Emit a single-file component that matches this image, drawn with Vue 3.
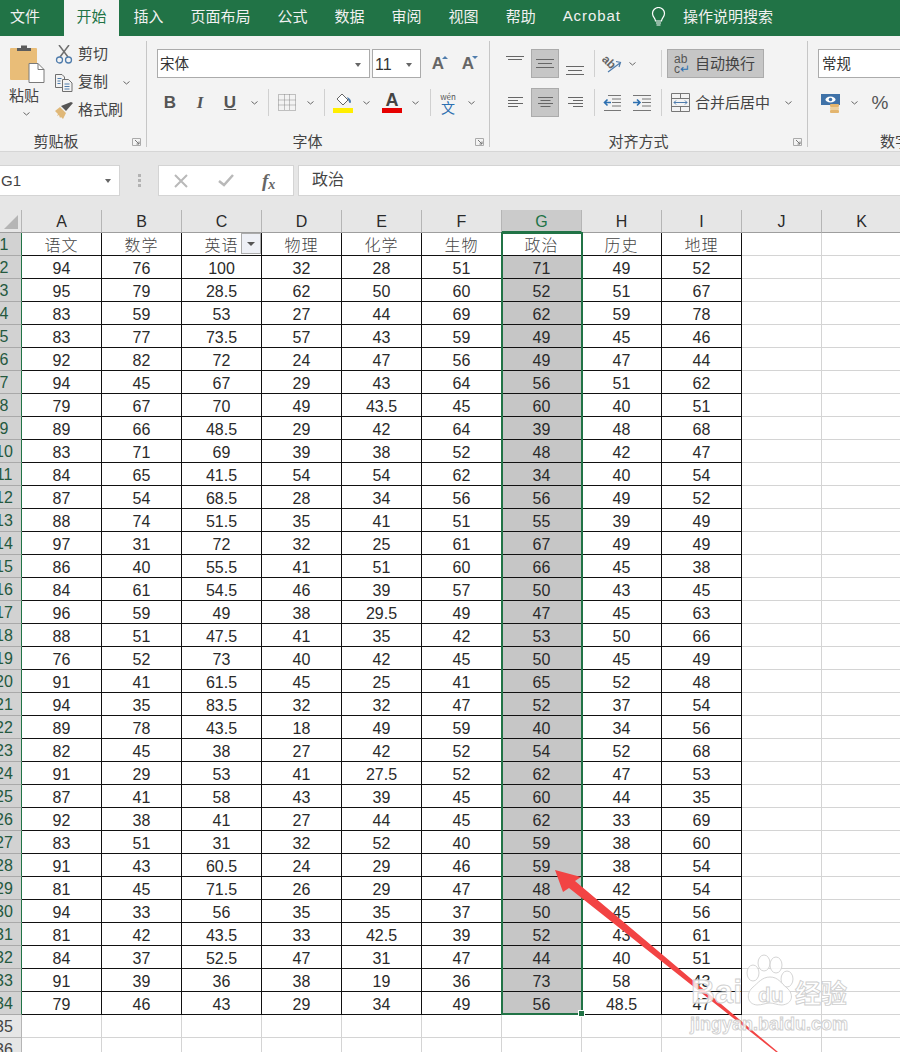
<script setup>
const tabs = ['开始', '插入', '页面布局', '公式', '数据', '审阅', '视图', '帮助', 'Acrobat']
const cols = ['A', 'B', 'C', 'D', 'E', 'F', 'G', 'H', 'I', 'J', 'K']
const heads = ['语文', '数学', '英语', '物理', '化学', '生物', '政治', '历史', '地理']
const raw = `94 76 100 32 28 51 71 49 52
95 79 28.5 62 50 60 52 51 67
83 59 53 27 44 69 62 59 78
83 77 73.5 57 43 59 49 45 46
92 82 72 24 47 56 49 47 44
94 45 67 29 43 64 56 51 62
79 67 70 49 43.5 45 60 40 51
89 66 48.5 29 42 64 39 48 68
83 71 69 39 38 52 48 42 47
84 65 41.5 54 54 62 34 40 54
87 54 68.5 28 34 56 56 49 52
88 74 51.5 35 41 51 55 39 49
97 31 72 32 25 61 67 49 49
86 40 55.5 41 51 60 66 45 38
84 61 54.5 46 39 57 50 43 45
96 59 49 38 29.5 49 47 45 63
88 51 47.5 41 35 42 53 50 66
76 52 73 40 42 45 50 45 49
91 41 61.5 45 25 41 65 52 48
94 35 83.5 32 32 47 52 37 54
89 78 43.5 18 49 59 40 34 56
82 45 38 27 42 52 54 52 68
91 29 53 41 27.5 52 62 47 53
87 41 58 43 39 45 60 44 35
92 38 41 27 44 45 62 33 69
83 51 31 32 52 40 59 38 60
91 43 60.5 24 29 46 59 38 54
81 45 71.5 26 29 47 48 42 54
94 33 56 35 35 37 50 45 56
81 42 43.5 33 42.5 39 52 43 61
84 37 52.5 47 31 47 44 40 51
91 39 36 38 19 36 73 58 43
79 46 43 29 34 49 56 48.5 47`
const rows = [heads, ...raw.split('\n').map((l) => l.split(' '))]
const extra = [35, 36]
</script>

<template>
  <div class="app">
    <div class="tabbar">
      <div class="tab first">文件</div>
      <div v-for="t in tabs" :key="t" class="tab" :class="{ active: t === '开始', latin: t === 'Acrobat' }">{{ t }}</div>
      <svg class="bulb" width="17" height="20" viewBox="0 0 17 20" fill="none" stroke="#fff" stroke-width="1.2">
        <path d="M5.5 14c0-3-3-4-3-7.5a6 6 0 0 1 12 0c0 3.500-3 4.500-3 7.500z" />
        <path d="M6 16h5M6.500 18h4" />
      </svg>
      <div class="search">操作说明搜索</div>
    </div>

    <div class="ribbon">
      <section class="group g-clip">
        <div class="body clip-body">
          <div class="paste">
            <svg width="36" height="38" viewBox="0 0 36 38">
              <rect x="0" y="3" width="27" height="32" rx="1" fill="#e9bd78" />
              <path d="M7 6V3h4V0.500h6V3h4v3z" fill="#5c5c5c" />
              <path d="M19 18.500h9l6 6v13H19z" fill="#fff" stroke="#7a7a7a" />
              <path d="M28 18.500v6h6" fill="none" stroke="#7a7a7a" />
            </svg>
            <div class="paste-label">粘贴</div>
            <svg class="chev" width="7" height="4" viewBox="0 0 7 4"><path d="M.5.500l3 2.500 3-2.500" fill="none" stroke="#666" /></svg>
          </div>
          <div class="clip-list">
            <div class="clip-row">
              <svg width="18" height="19" viewBox="0 0 18 19" fill="none">
                <path d="M4 0l9 12M14 0L5 12" stroke="#6f6f6f" stroke-width="1.5" />
                <circle cx="4.500" cy="15" r="3" stroke="#4f7cac" stroke-width="1.3" />
                <circle cx="13.500" cy="15" r="3" stroke="#4f7cac" stroke-width="1.3" />
              </svg>
              <span>剪切</span>
            </div>
            <div class="clip-row">
              <svg width="18" height="18" viewBox="0 0 18 18" fill="none" stroke="#6f6f6f">
                <path d="M8 13.500H.5V.5H7l2.500 2.500v2" />
                <path d="M7.500 5.500h6l3.500 3.500v8.500H7.500z" fill="#f3f3f3" />
                <path d="M9.500 10h5M9.500 12.500h5M9.500 15h5M2.500 4.500h4M2.500 7h3M2.500 9.500h3" stroke="#4f7cac" />
              </svg>
              <span>复制</span>
              <svg class="copy-chev" width="7" height="4" viewBox="0 0 7 4"><path d="M.5.500l3 2.500 3-2.500" fill="none" stroke="#666" /></svg>
            </div>
            <div class="clip-row">
              <svg width="18" height="17" viewBox="0 0 18 17">
                <path d="M0 9l5-4 6 6-3 6-2-2-1 1-1-3-2 1 1-2z" fill="#e0b878" />
                <path d="M6 4l5 5 7-8-2-1z" fill="#555" />
              </svg>
              <span>格式刷</span>
            </div>
          </div>
        </div>
        <div class="title">剪贴板<svg class="launch" width="10" height="8" viewBox="0 0 10 8" fill="none" stroke="#777"><path d="M.5 7.500v-7h8v7h-8z" stroke="#aaa" /><path d="M3 2l4 4M7 3.500V6H4.500" /></svg></div>
      </section>

      <section class="group g-font">
        <div class="body stack">
          <div class="row font-r1">
            <div class="input font-name">宋体<i class="tri"></i></div>
            <div class="input font-size"><span class="latin-t">11</span><i class="tri"></i></div>
            <div class="slot w14 m10 grow-a">A<i class="up"></i></div>
            <div class="slot w14 m16 grow-a">A<i class="up down"></i></div>
          </div>
          <div class="row font-r2">
            <div class="slot w30 fmt bold">B</div>
            <div class="slot w30 fmt ital">I</div>
            <div class="slot w30 fmt under">U</div>
            <div class="slot w18"><svg width="7" height="4" viewBox="0 0 7 4"><path d="M.5.500l3 2.500 3-2.500" fill="none" stroke="#666" /></svg></div>
            <div class="slot w10"><i class="sep"></i></div>
            <div class="slot w28">
              <svg width="18" height="17" viewBox="0 0 18 17" fill="none" stroke="#8a8a8a" stroke-dasharray="1 1">
                <path d="M.5.500h17v16H.5zM6.500.5v16M11.500.5v16M.5 6h17M.5 11h17" />
              </svg>
            </div>
            <div class="slot w18"><svg width="7" height="4" viewBox="0 0 7 4"><path d="M.5.500l3 2.500 3-2.500" fill="none" stroke="#666" /></svg></div>
            <div class="slot w10"><i class="sep"></i></div>
            <div class="slot w28">
              <svg width="20" height="20" viewBox="0 0 20 20">
                <path d="M9 1l6 6-5 5-6-6z" fill="#fff" stroke="#666" />
                <path d="M14 4c3 1 4 3 4 5a1 1 0 0 1-2 0z" fill="#4f7cac" />
                <rect y="15" width="20" height="5" fill="#ffee00" />
              </svg>
            </div>
            <div class="slot w18"><svg width="7" height="4" viewBox="0 0 7 4"><path d="M.5.500l3 2.500 3-2.500" fill="none" stroke="#666" /></svg></div>
            <div class="slot w34 color-a"><span>A</span><i></i></div>
            <div class="slot w12"><svg width="7" height="4" viewBox="0 0 7 4"><path d="M.5.500l3 2.500 3-2.500" fill="none" stroke="#666" /></svg></div>
            <div class="slot w18"><i class="sep"></i></div>
            <div class="slot w18 wen"><span class="py">wén</span><span class="wz">文</span></div>
            <div class="slot w28"><svg width="7" height="4" viewBox="0 0 7 4"><path d="M.5.500l3 2.500 3-2.500" fill="none" stroke="#666" /></svg></div>
          </div>
        </div>
        <div class="title">字体<svg class="launch" width="10" height="8" viewBox="0 0 10 8" fill="none" stroke="#777"><path d="M.5 7.500v-7h8v7h-8z" stroke="#aaa" /><path d="M3 2l4 4M7 3.500V6H4.500" /></svg></div>
      </section>

      <section class="group g-align">
        <div class="body stack">
          <div class="row align-r1">
            <div class="slot w28 start"><svg width="18" height="6" viewBox="0 0 18 6" stroke="#666"><path d="M0 .5h18M2 3.500h14" /></svg></div>
            <div class="slot w28 pressed m2"><svg width="18" height="10" viewBox="0 0 18 10" stroke="#666"><path d="M0 .5h18M2 4.500h14M0 8.500h18" /></svg></div>
            <div class="slot w28 m2 end"><svg width="18" height="12" viewBox="0 0 18 12" stroke="#666"><path d="M0 3.500h18M2 7.500h14M0 11.500h18" /></svg></div>
            <div class="slot w10"><i class="sep"></i></div>
            <div class="slot w26">
              <svg width="20" height="18" viewBox="0 0 20 18" fill="none">
                <text x="0" y="11" transform="rotate(45 7 7)" class="ab-tx">ab</text>
                <path d="M6 17L18 8M14 6.500l4.500 1-1.500 4.500" stroke="#4f7cac" stroke-width="1.200" />
              </svg>
            </div>
            <div class="slot w14"><svg width="7" height="4" viewBox="0 0 7 4"><path d="M.5.500l3 2.500 3-2.500" fill="none" stroke="#666" /></svg></div>
            <div class="w17"></div>
            <div class="slot w10"><i class="sep"></i></div>
            <div class="wrap-btn m1">
              <span class="ab"><b>ab</b><b>c<em>↵</em></b></span>
              <span class="up-1">自动换行</span>
            </div>
          </div>
          <div class="row align-r2">
            <div class="slot w28"><svg width="15" height="11" viewBox="0 0 15 11" stroke="#666"><path d="M0 .5h15M0 3.500h10M0 6.500h15M0 9.500h10" /></svg></div>
            <div class="slot w28 pressed m2"><svg width="15" height="11" viewBox="0 0 15 11" stroke="#666"><path d="M0 .5h15M2.500 3.500h10M0 6.500h15M2.500 9.500h10" /></svg></div>
            <div class="slot w28 m2"><svg width="15" height="11" viewBox="0 0 15 11" stroke="#666"><path d="M0 .5h15M5 3.500h10M0 6.500h15M5 9.500h10" /></svg></div>
            <div class="slot w10"><i class="sep"></i></div>
            <div class="slot w26">
              <svg width="18" height="16" viewBox="0 0 18 16" fill="none">
                <path d="M5 .5h13M9 4h9M9 7.500h9M9 11h9M1 15.500h17" stroke="#777" />
                <path d="M8 7.500H1.500M4.500 4.500l-3 3 3 3" stroke="#2c6fb0" stroke-width="1.600" />
              </svg>
            </div>
            <div class="w4"></div>
            <div class="slot w26">
              <svg width="18" height="16" viewBox="0 0 18 16" fill="none">
                <path d="M0 .5h18M9 4h9M9 7.500h9M9 11h9M0 15.500h18" stroke="#777" />
                <path d="M0 7.500h6.500M4 4.500l3 3-3 3" stroke="#2c6fb0" stroke-width="1.600" />
              </svg>
            </div>
            <div class="w1"></div>
            <div class="slot w10"><i class="sep"></i></div>
            <div class="slot w26 m1">
              <svg width="19" height="19" viewBox="0 0 19 19" fill="none">
                <path d="M.5.500h18v18H.5zM.5 5.500h18M.5 13.500h18M9.500.5v5M9.500 13.500v5" stroke="#777" />
                <path d="M3 9.500h13M5 7.500l-2 2 2 2M14 7.500l2 2-2 2" stroke="#4f7cac" />
              </svg>
            </div>
            <div class="merge-text">合并后居中</div>
            <div class="slot w36"><svg width="7" height="4" viewBox="0 0 7 4"><path d="M.5.500l3 2.500 3-2.500" fill="none" stroke="#666" /></svg></div>
          </div>
        </div>
        <div class="title">对齐方式<svg class="launch" width="10" height="8" viewBox="0 0 10 8" fill="none" stroke="#777"><path d="M.5 7.500v-7h8v7h-8z" stroke="#aaa" /><path d="M3 2l4 4M7 3.500V6H4.500" /></svg></div>
      </section>

      <section class="group g-num">
        <div class="body stack">
          <div class="row num-r1"><div class="input num-input">常规</div></div>
          <div class="row num-r2">
            <div class="slot w26">
              <svg width="20" height="20" viewBox="0 0 20 20">
                <rect y="1" width="19" height="11" fill="#3f72a8" />
                <ellipse cx="9.500" cy="6.500" rx="5" ry="3" fill="#fff" />
                <circle cx="9.500" cy="6.500" r="1.800" fill="#3f72a8" />
                <rect x="9" y="11" width="9" height="3" rx="1" fill="#e3b56e" />
                <rect x="9" y="14" width="9" height="3" rx="1" fill="#ecd09f" />
                <rect x="9" y="17" width="9" height="3" rx="1" fill="#e3b56e" />
              </svg>
            </div>
            <div class="slot w20"><svg width="7" height="4" viewBox="0 0 7 4"><path d="M.5.500l3 2.500 3-2.500" fill="none" stroke="#666" /></svg></div>
            <div class="slot w32 pct">%</div>
          </div>
        </div>
        <div class="title">数字</div>
      </section>
    </div>

    <div class="formula">
      <div class="namebox">G1<i class="tri"></i></div>
      <div class="dots"><i></i><i></i><i></i></div>
      <div class="fx-btns">
        <svg width="14" height="14" viewBox="0 0 14 14" stroke="#b9b9b9" stroke-width="2" fill="none"><path d="M1 1l12 12M13 1L1 13" /></svg>
        <svg width="16" height="13" viewBox="0 0 16 13" stroke="#b9b9b9" stroke-width="2.500" fill="none"><path d="M1 7l5 4 9-10" /></svg>
        <span class="fx">f<sub>x</sub></span>
      </div>
      <div class="fx-input">政治</div>
    </div>

    <div class="sheet">
      <div class="corner"><i></i></div>
      <div v-for="c in cols" :key="c" class="colhead" :class="{ sel: c === 'G' }">{{ c }}</div>

      <template v-for="(r, i) in rows" :key="i">
        <div class="rowhead on"><span>{{ i + 1 }}</span></div>
        <div
          v-for="(v, j) in r"
          :key="j"
          class="cell data"
          :class="{ cn: i === 0, g: j === 6 && i > 0 }"
        >
          {{ v }}
          <span v-if="i === 0 && j === 2" class="filter"><i></i></span>
        </div>
        <div class="cell"></div>
        <div class="cell"></div>
      </template>
      <template v-for="n in extra" :key="n">
        <div class="rowhead"><span>{{ n }}</span></div>
        <div v-for="c in cols" :key="c" class="cell"></div>
      </template>

      <div class="selection"><i></i></div>
    </div>

    <svg class="overlay" width="900" height="1052" viewBox="0 0 900 1052">
      <path d="M555 870L581 877L575 881L778 1052L776 1052L569 888L563 892Z" fill="#f24444" />
      <g class="wm">
        <ellipse cx="753" cy="973" rx="6" ry="8" />
        <ellipse cx="764" cy="963" rx="6" ry="8" />
        <ellipse cx="776" cy="965" rx="6" ry="8" />
        <ellipse cx="787" cy="979" rx="6" ry="8" />
        <path d="M770 977c8 0 11 6 17 11 7 6 6 16-5 17-5 0-8-2-12-2s-8 2-13 2c-10-1-11-11-5-17 6-5 10-11 18-11z" />
        <text x="691" y="1003" class="wm-bai">Bai</text>
        <text x="758" y="1002" class="wm-du">du</text>
        <text x="795" y="1003" class="wm-cn">经验</text>
        <text x="690" y="1030" class="wm-url">jingyan.baidu.com</text>
      </g>
    </svg>
  </div>
</template>

<style>
html, body { margin: 0; padding: 0; background: #fff; }
</style>

<style scoped>
.app {
  position: relative;
  width: 900px;
  height: 1052px;
  overflow: hidden;
  background: #fff;
  color: #444;
  font-family: "Noto Sans CJK SC", "Liberation Sans", sans-serif;
}
i, em { font-style: normal; }

.tabbar {
  display: flex;
  gap: 2px;
  height: 36px;
  background: #217346;
  color: #f1f1f1;
  font-size: 15px;
  line-height: 32px;
}
.tab { padding: 0 12.5px; white-space: nowrap; }
.tab.first { padding: 0 22px 0 10px; }
.tab.active { background: #f3f3f3; color: #217346; }
.tab.latin { font-family: "Liberation Sans", sans-serif; letter-spacing: .95px; padding-right: 18px; }
.bulb { margin: 7px 0 0 9px; flex: none; }
.search { margin-left: 14px; white-space: nowrap; }

.ribbon {
  display: flex;
  height: 115px;
  background: #f3f3f3;
  border-bottom: 1px solid #d6d6d6;
  box-sizing: content-box;
  font-size: 15px;
  line-height: 20px;
  color: #444;
}
.group {
  flex: none;
  display: flex;
  flex-direction: column;
  height: 106px;
  margin-top: 5px;
  box-sizing: border-box;
  border-right: 1px solid #c6c6c6;
}
.g-clip { width: 147px; }
.g-font { width: 343px; }
.g-align { width: 318px; }
.g-num { width: 174px; border-right: 0; }
.body { height: 92px; display: flex; }
.title {
  position: relative;
  height: 14px;
  line-height: 16px;
  text-align: center;
  white-space: nowrap;
}
.g-clip .title { padding-right: 34px; }
.g-font .title { padding-right: 21px; }
.g-align .title { padding-right: 20px; }
.launch { position: absolute; right: 4px; top: 5px; }

.clip-body { padding-left: 10px; }
.paste { width: 35px; padding-top: 4px; display: flex; flex-direction: column; }
.paste-label { margin: 1px 0 0 -1px; white-space: nowrap; line-height: 22px; }
.paste .chev { margin: 6px 0 0 13px; }
.clip-list { margin-left: 10px; display: flex; flex-direction: column; gap: 1px; }
.clip-row { height: 27px; display: flex; align-items: center; gap: 5px; white-space: nowrap; }
.clip-row span { margin-bottom: 3px; }
.copy-chev { margin-left: 10px; }

.stack { flex-direction: column; padding-top: 8px; gap: 10px; box-sizing: border-box; }
.row { display: flex; height: 29px; flex: none; align-items: stretch; }
.font-r1 { margin-left: 10px; }
.font-r2 { margin-left: 8px; }
.align-r1, .align-r2 { margin-left: 11px; }
.num-r1, .num-r2 { margin-left: 10px; }

.input {
  position: relative;
  box-sizing: border-box;
  background: #fff;
  border: 1px solid #ababab;
  line-height: 27px;
  padding-left: 2px;
  font-size: 14.500px;
  color: #333;
}
.font-name, .num-input { line-height: 25px; }
.font-name { width: 213px; }
.font-size { width: 49px; margin-left: 2px; }
.latin-t { font-family: "Liberation Sans", sans-serif; font-size: 16px; }
.num-input { width: 140px; padding-left: 3px; }
.tri {
  position: absolute;
  right: 8px;
  top: 13px;
  border: 3.500px solid transparent;
  border-top: 4px solid #666;
  border-bottom: 0;
}

.slot { display: flex; align-items: center; justify-content: center; flex: none; box-sizing: border-box; }
.w10 { width: 10px; } .w12 { width: 12px; } .w14 { width: 14px; } .w17 { width: 17px; flex: none; }
.w18 { width: 18px; } .w20 { width: 20px; } .w26 { width: 26px; } .w28 { width: 28px; }
.w30 { width: 30px; } .w32 { width: 32px; } .w34 { width: 34px; } .w36 { width: 36px; }
.w4 { width: 4px; flex: none; } .w1 { width: 1px; flex: none; }
.m1 { margin-left: 1px; } .m2 { margin-left: 2px; } .m10 { margin-left: 10px; } .m16 { margin-left: 16px; }
.sep { display: block; width: 1px; height: 27px; background: #d0d0d0; }
.start { align-items: flex-start; padding-top: 7px; }
.end { align-items: flex-end; padding-bottom: 3px; }
.pressed { background: #c6c6c6; border: 1px solid #ababab; }

.grow-a {
  position: relative;
  font-family: "Liberation Sans", sans-serif;
  font-size: 17px;
  font-weight: 700;
  color: #666;
}
.up {
  position: absolute;
  right: -3px;
  top: 7px;
  border: 3px solid transparent;
  border-bottom: 3px solid #4f7cac;
  border-top: 0;
}
.up.down { border-bottom: 0; border-top: 3px solid #4f7cac; }
.fmt { font-family: "Liberation Sans", sans-serif; font-size: 17px; font-weight: 700; color: #555; }
.ital { font-style: italic; font-family: "Liberation Serif", serif; }
.under { text-decoration: underline; }
.color-a { flex-direction: column; font-family: "Liberation Sans", sans-serif; font-weight: 700; color: #444; font-size: 18px; line-height: 15px; }
.color-a i { display: block; width: 20px; height: 5px; background: #e60000; }
.wen { flex-direction: column; font-size: 8px; line-height: 9px; color: #555; }
.wen .wz { font-size: 14px; line-height: 13px; color: #2c6fb0; }
.ab-tx { font: 700 12px "Liberation Sans", sans-serif; fill: #666; }

.wrap-btn {
  width: 97px;
  box-sizing: border-box;
  display: flex;
  align-items: center;
  gap: 5px;
  padding-left: 6px;
  background: #c6c6c6;
  border: 1px solid #ababab;
  white-space: nowrap;
}
.up-1 { margin-bottom: 2px; }
.ab { display: flex; flex-direction: column; font: 700 12px/10px "Liberation Sans", sans-serif; color: #555; width: 16px; }
.ab b { font-weight: 400; }
.ab em { color: #2c6fb0; }
.merge-text { margin-left: 2px; width: 75px; line-height: 27px; white-space: nowrap; }
.pct { font: 400 19px "Liberation Sans", sans-serif; color: #555; }

.formula {
  display: flex;
  height: 58px;
  box-sizing: border-box;
  padding-top: 13px;
  padding-bottom: 14px;
  background: #e6e6e6;
}
.namebox {
  position: relative;
  width: 120px;
  box-sizing: border-box;
  background: #fff;
  border: 1px solid #d4d4d4;
  border-left: 0;
  padding-left: 1px;
  font: 15px/30px "Liberation Sans", sans-serif;
  color: #444;
}
.dots { width: 38px; display: flex; flex-direction: column; align-items: center; justify-content: center; gap: 2px; }
.dots i { width: 3px; height: 3px; background: #b3b3b3; display: block; }
.fx-btns {
  width: 136px;
  box-sizing: border-box;
  display: flex;
  align-items: center;
  gap: 30px;
  padding-left: 15px;
  background: #fff;
  border: 1px solid #d4d4d4;
}
.fx { font: italic 700 19px/1 "Liberation Serif", serif; color: #666; margin-left: -2px; }
.fx sub { font-size: 14px; vertical-align: -2px; line-height: 0; }
.fx-input {
  flex: 1;
  margin-left: 4px;
  box-sizing: border-box;
  padding-left: 13px;
  background: #fff;
  border: 1px solid #d4d4d4;
  border-right: 0;
  font-size: 16px;
  line-height: 25px;
  color: #444;
}

.sheet {
  position: relative;
  display: grid;
  grid-template-columns: 22px repeat(11, 80px);
  grid-auto-rows: 23px;
  font: 16px/22px "Liberation Sans", sans-serif;
  color: #2a2a2a;
}
.corner {
  background: #e6e6e6;
  box-sizing: border-box;
  border-right: 1px solid #b5b5b5;
  border-bottom: 1px solid #9e9e9e;
}
.corner i {
  display: block;
  width: 0;
  margin: 5px 0 0 4px;
  border-left: 14px solid transparent;
  border-bottom: 14px solid #b5b5b5;
}
.colhead {
  background: #e6e6e6;
  box-sizing: border-box;
  border-right: 1px solid #b5b5b5;
  border-bottom: 1px solid #9e9e9e;
  text-align: center;
  color: #2a2a2a;
  padding-top: 1px;
}
.colhead.sel { background: #cbcbcb; border-bottom: 2px solid #217346; color: #217346; }
.rowhead {
  display: flex;
  justify-content: flex-end;
  overflow: hidden;
  background: #e6e6e6;
  box-sizing: border-box;
  border-right: 1px solid #b5b5b5;
  border-bottom: 1px solid #b5b5b5;
  color: #444;
  padding-top: 1px;
}
.rowhead span { flex: none; width: 34px; text-align: center; }
.rowhead.on { background: #d2d2d2; border-right: 1px solid #217346; border-bottom-color: #a9a9a9; color: #24593f; }
.cell {
  position: relative;
  box-sizing: border-box;
  border-right: 1px solid #d4d4d4;
  border-bottom: 1px solid #d4d4d4;
  text-align: center;
  white-space: nowrap;
  padding-top: 2px;
}
.cell.data { border-right-color: #111; border-bottom-color: #111; }
.cell.cn { font-family: "Noto Sans CJK SC", sans-serif; letter-spacing: 1px; color: #444; font-weight: 300; line-height: 22px; padding-top: 0; }
.cell.g { background: #c6c6c6; }
.filter {
  position: absolute;
  right: 0;
  top: 0;
  width: 20px;
  height: 21px;
  box-sizing: border-box;
  background: #eef0f6;
  border: 1px solid #ababab;
  display: flex;
  align-items: center;
  justify-content: center;
}
.filter i { border: 4px solid transparent; border-top: 4px solid #555; border-bottom: 0; }
.selection {
  position: absolute;
  left: 501px;
  top: 22px;
  width: 82px;
  height: 783px;
  box-sizing: border-box;
  border: 2px solid #217346;
  pointer-events: none;
}
.selection i {
  position: absolute;
  right: -4px;
  bottom: -4px;
  width: 5px;
  height: 5px;
  background: #217346;
  border: 1px solid #fff;
  box-sizing: content-box;
}
.overlay { position: absolute; left: 0; top: 0; pointer-events: none; }
.wm ellipse, .wm path, .wm text {
  fill: rgba(255, 255, 255, .82);
  stroke: #cfcfcf;
  stroke-width: .9;
}
.wm-bai { font: 700 33px "Liberation Sans", sans-serif; }
.wm-du { font: 700 21px "Liberation Sans", sans-serif; }
.wm-cn { font: 700 26px "Noto Sans CJK SC", sans-serif; }
.wm-url { font: 700 18px "Liberation Sans", sans-serif; }
</style>
